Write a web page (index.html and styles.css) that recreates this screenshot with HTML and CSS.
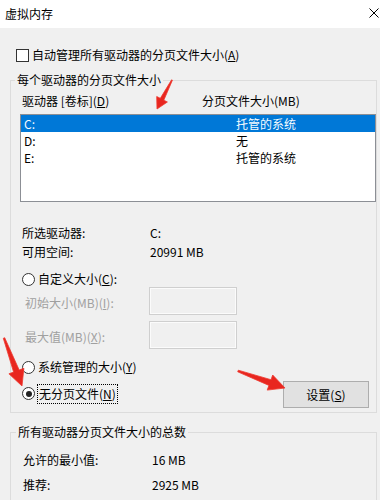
FILE: index.html
```html
<!DOCTYPE html>
<html lang="zh-CN">
<head>
<meta charset="utf-8">
<title>虚拟内存</title>
<link rel="stylesheet" href="styles.css">
</head>
<body>
<div class="window">
  <div class="titlebar">
    <span class="title">虚拟内存</span>
    <svg class="close" width="10" height="10" viewBox="0 0 10 10"><path d="M0.5 0.5 L9.5 9.5 M9.5 0.5 L0.5 9.5" stroke="#000" stroke-width="1" fill="none"/></svg>
  </div>
  <div class="dialog">
    <div class="auto-row">
      <span class="checkbox"></span>
      <span>自动管理所有驱动器的分页文件大小(<u class="k">A</u>)</span>
    </div>

    <fieldset class="group group-drives">
      <legend class="legend">每个驱动器的分页文件大小</legend>
      <div class="headers">
        <span>驱动器 [卷标](<u class="k">D</u>)</span>
        <span>分页文件大小(MB)</span>
      </div>
      <div class="listbox">
        <div class="lrow selected"><span>C:</span><span>托管的系统</span></div>
        <div class="lrow"><span>D:</span><span>无</span></div>
        <div class="lrow"><span>E:</span><span>托管的系统</span></div>
      </div>
      <div class="info first"><span>所选驱动器:</span><span>C:</span></div>
      <div class="info"><span>可用空间:</span><span>20991 MB</span></div>

      <div class="radio-row custom">
        <span class="radio"></span>
        <span class="rlabel">自定义大小(<u class="k">C</u>):</span>
      </div>
      <div class="field-row">
        <span class="flabel">初始大小(MB)(<u class="k">I</u>):</span>
        <span class="input"></span>
      </div>
      <div class="field-row second">
        <span class="flabel">最大值(MB)(<u class="k">X</u>):</span>
        <span class="input"></span>
      </div>
      <div class="radio-row sysman">
        <span class="radio"></span>
        <span class="rlabel">系统管理的大小(<u class="k">Y</u>)</span>
      </div>
      <div class="nopage-row">
        <div class="radio-row">
          <span class="radio checked"></span>
          <span class="rlabel focus">无分页文件(<u class="k">N</u>)</span>
        </div>
        <div class="button">设置(<u class="k">S</u>)</div>
      </div>
    </fieldset>

    <fieldset class="group group-total">
      <legend class="legend">所有驱动器分页文件大小的总数</legend>
      <div class="info total first"><span>允许的最小值:</span><span>16 MB</span></div>
      <div class="info total second"><span>推荐:</span><span>2925 MB</span></div>
    </fieldset>
  </div>

  <svg class="annotations" width="380" height="500" viewBox="0 0 380 500">
    <g fill="#e8261f" stroke="#ef3a30" stroke-width="0.8" stroke-linejoin="round">
      <polygon points="172.4,80.2 163.8,100.2 167.4,102.0 157,109 156.7,96.5 160.3,98.3 171.6,79.8"/>
      <polygon points="4.7,337.7 19.2,370.0 23.9,368.2 22,386 8.9,373.8 13.6,372.1 3.3,338.3"/>
      <polygon points="237.7,371.8 268.9,385.4 267.2,390.1 285,388 272.7,375.0 271.0,379.7 238.3,370.2"/>
    </g>
  </svg>
</div>
</body>
</html>
```

FILE: styles.css
```css
html, body {
  margin: 0;
  padding: 0;
}

body {
  width: 380px;
  height: 500px;
  overflow: hidden;
  background: #f0f0f0;
  font-family: "Noto Sans CJK SC", "Noto Sans", sans-serif;
  font-size: 12px;
  line-height: 16px;
  color: #000;
}

.window {
  position: relative;
  width: 380px;
  height: 500px;
}

.k {
  text-decoration: underline;
}

.titlebar {
  height: 28px;
  background: #fff;
  display: flex;
  align-items: center;
  justify-content: space-between;
  padding: 0 1px 0 5px;
}

.title {
  line-height: 16px;
}

.close {
  display: block;
  margin-top: -2px;
}

.dialog {
  background: #f0f0f0;
}

.auto-row {
  display: flex;
  align-items: center;
  gap: 3px;
  height: 16px;
  margin-top: 19px;
  padding-left: 16px;
}

.checkbox {
  width: 11px;
  height: 11px;
  border: 1px solid #333;
  background: #fff;
}

.group {
  margin: 9px 3px 0 10px;
  padding: 0;
  border: 1px solid #dcdcdc;
  min-width: 0;
}

.legend {
  margin-left: 4px;
  padding: 0 2px;
  line-height: 16px;
}

.headers {
  display: grid;
  grid-template-columns: 180px 1fr;
  margin-top: 5px;
  padding-left: 11px;
}

.listbox {
  margin: 5px 0 0 9px;
  height: 86px;
  border: 1px solid #8c8f95;
  background: #fff;
}

.lrow {
  display: grid;
  grid-template-columns: 212px 1fr;
  height: 17px;
  line-height: 17px;
  padding-left: 3px;
}

.lrow.selected {
  background: #0078d7;
  color: #f4fbff;
}

.info {
  display: grid;
  grid-template-columns: 128px 1fr;
  padding-left: 11px;
  margin-top: 3px;
}

.info.first {
  margin-top: 23px;
}

.radio-row {
  display: flex;
  align-items: center;
  gap: 3px;
  padding-left: 11px;
}

.radio-row.custom {
  margin-top: 11px;
}

.radio {
  width: 11px;
  height: 11px;
  border: 1px solid #333;
  border-radius: 50%;
  background: #fff;
  position: relative;
  flex: none;
}

.radio.checked::after {
  content: "";
  position: absolute;
  left: 2.5px;
  top: 2.5px;
  width: 6px;
  height: 6px;
  border-radius: 50%;
  background: #222;
}

.field-row {
  display: grid;
  grid-template-columns: 124px 88px;
  align-items: center;
  padding-left: 14px;
  color: #a0a0a0;
}

.field-row.second {
  margin-top: 6px;
}

.flabel {
  padding-top: 3px;
}

.input {
  height: 26px;
  border: 1px solid #cfcfcf;
  box-shadow: inset 0 0 0 1px #fbfbfb;
  background: #f0f0f0;
}

.radio-row.sysman {
  margin-top: 10px;
}

.nopage-row {
  display: flex;
  align-items: center;
  justify-content: space-between;
  margin-top: 6px;
  padding-bottom: 4px;
}

.nopage-row .radio-row {
  gap: 2px;
  margin-top: -2px;
}

.focus {
  border: 1px dotted #000;
  padding: 1px 1px 1px 1px;
}

.button {
  width: 84px;
  height: 25px;
  line-height: 25px;
  margin-right: 7px;
  border: 1px solid #adadad;
  background: #e1e1e1;
  text-align: center;
}

.group-total {
  margin-top: 11px;
  padding-bottom: 30px;
}

.group-total .legend {
  margin-left: 5px;
}

.info.total {
  grid-template-columns: 129px 1fr;
  padding-left: 12px;
}

.info.total.first {
  margin-top: 12px;
}

.info.total.second {
  margin-top: 9px;
}

.annotations {
  position: absolute;
  left: 0;
  top: 0;
  pointer-events: none;
}
```
